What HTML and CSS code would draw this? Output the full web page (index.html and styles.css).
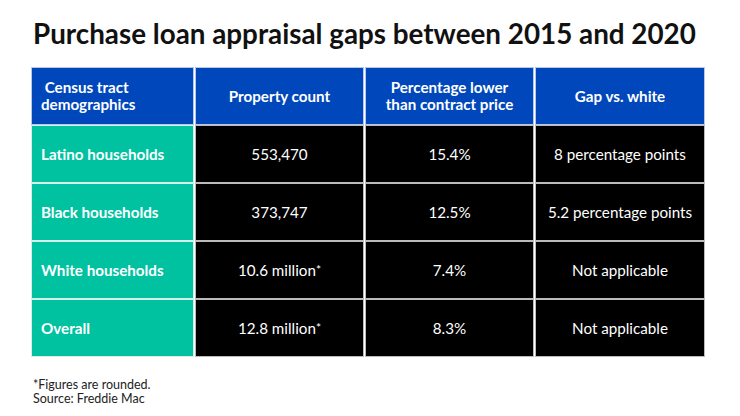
FILE: index.html
```html
<!DOCTYPE html>
<html lang="en">
<head>
  <meta charset="UTF-8" />
  <title>Purchase loan appraisal gaps</title>
  <link rel="stylesheet" href="styles.css">
</head>
<body>
  <div class="chart">
    <h1 class="title">Purchase loan appraisal gaps between 2015 and 2020</h1>

    <div class="table">
      <div class="cell head first">&nbsp;Census tract<br>demographics</div>
      <div class="cell head">Property count</div>
      <div class="cell head">Percentage lower<br>than contract price</div>
      <div class="cell head">Gap vs. white</div>

      <div class="cell label">Latino households</div>
      <div class="cell value">553,470</div>
      <div class="cell value">15.4%</div>
      <div class="cell value">8 percentage points</div>

      <div class="cell label">Black households</div>
      <div class="cell value">373,747</div>
      <div class="cell value">12.5%</div>
      <div class="cell value">5.2 percentage points</div>

      <div class="cell label">White households</div>
      <div class="cell value">10.6 million<sup>*</sup></div>
      <div class="cell value">7.4%</div>
      <div class="cell value">Not applicable</div>

      <div class="cell label">Overall</div>
      <div class="cell value">12.8 million<sup>*</sup></div>
      <div class="cell value">8.3%</div>
      <div class="cell value">Not applicable</div>
    </div>

    <p class="notes">*Figures are rounded.<br>Source: Freddie Mac</p>
  </div>
</body>
</html>
```

FILE: styles.css
```css
:root {
  --blue: #0047bb;
  --teal: #00c1a0;
  --ink: #111;
}

body {
  margin: 0;
  background: #fff;
  font-family: Lato, 'Liberation Sans', sans-serif;
  color: var(--ink);
}

.chart {
  padding: 17px 36px 0 32px;
}

.title {
  margin: 0 0 17px 1px;
  font-size: 27.8px;
  line-height: 34px;
  font-weight: 700;
  white-space: nowrap;
}

/* ----- table ----- */
.table {
  display: grid;
  grid-template-columns: 161px 167px 167px 168px;
  grid-auto-rows: 56px;
  gap: 2px 3px;
  width: 672px;
}

.cell {
  display: flex;
  align-items: center;
  justify-content: center;
  text-align: center;
  color: #fff;
  font-size: 15.2px;
  line-height: 17px;
}

.head {
  background: var(--blue);
  font-weight: 700;
  box-shadow: 0 0 0 1px #b8c8ea;
}

.head.first {
  justify-content: flex-start;
  text-align: left;
  padding-left: 9px;
}

.label {
  background: var(--teal);
  font-weight: 700;
  justify-content: flex-start;
  padding-left: 9px;
  box-shadow: 0 0 0 1px #d8efe9;
}

.value {
  background: #000;
  box-shadow: 0 0 0 1px #bbb;
}

.value sup {
  font-size: 12px;
  line-height: 0;
  vertical-align: 4px;
}

.notes {
  margin: 22px 0 0 1px;
  font-size: 12.5px;
  line-height: 14px;
  color: #222;
}
```
